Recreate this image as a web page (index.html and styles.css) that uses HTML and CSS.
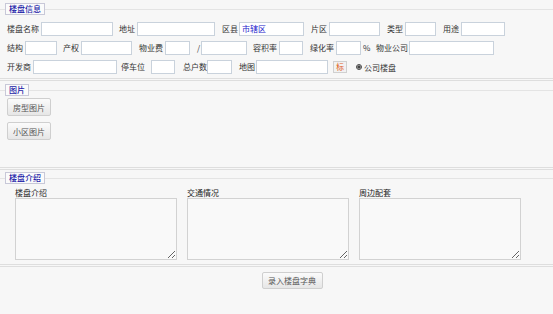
FILE: index.html
```html
<!DOCTYPE html>
<html lang="zh-CN">
<head>
<meta charset="UTF-8">
<title>楼盘字典</title>
<link rel="stylesheet" href="styles.css">
</head>
<body>
<form class="page">
  <fieldset class="box box-info">
    <legend>楼盘信息</legend>
    <div class="row">
      <span class="lb w34">楼盘名称</span><input class="ipt w72" type="text">
      <span class="lb ml6 w18">地址</span><input class="ipt w78" type="text">
      <span class="lb ml7 w17">区县</span><span class="ipt pick w65">市辖区</span>
      <span class="lb ml7 w18">片区</span><input class="ipt w51" type="text">
      <span class="lb ml7 w18">类型</span><input class="ipt w31" type="text">
      <span class="lb ml7 w18">用途</span><input class="ipt w44" type="text">
    </div>
    <div class="row">
      <span class="lb w18">结构</span><input class="ipt w32" type="text">
      <span class="lb ml6 w18">产权</span><input class="ipt w51" type="text">
      <span class="lb ml7 w26">物业费</span><input class="ipt w25" type="text">
      <span class="lb ml7 w4">/</span><input class="ipt w46" type="text">
      <span class="lb ml6 w26">容积率</span><input class="ipt w24" type="text">
      <span class="lb ml7 w26">绿化率</span><input class="ipt w25" type="text">
      <span class="lb ml2 w13">%</span>
      <span class="lb w33">物业公司</span><input class="ipt w85" type="text">
    </div>
    <div class="row">
      <span class="lb w26">开发商</span><input class="ipt w84" type="text">
      <span class="lb ml4 w30">停车位</span><input class="ipt w24" type="text">
      <span class="lb ml8 w24">总户数</span><input class="ipt w25" type="text">
      <span class="lb ml7 w17">地图</span><input class="ipt w72" type="text">
      <span class="mark">标</span>
      <label class="own"><input type="radio" checked>公司楼盘</label>
    </div>
  </fieldset>

  <fieldset class="box box-pic">
    <legend>图片</legend>
    <button type="button" class="btn">房型图片</button>
    <button type="button" class="btn">小区图片</button>
  </fieldset>

  <fieldset class="box box-desc">
    <legend>楼盘介绍</legend>
    <div class="cols">
      <div class="col">
        <div class="cap">楼盘介绍</div>
        <textarea class="txt"></textarea>
      </div>
      <div class="col">
        <div class="cap">交通情况</div>
        <textarea class="txt"></textarea>
      </div>
      <div class="col">
        <div class="cap">周边配套</div>
        <textarea class="txt"></textarea>
      </div>
    </div>
  </fieldset>

  <div class="foot">
    <button type="button" class="btn btn-save">录入楼盘字典</button>
  </div>
</form>
</body>
</html>
```

FILE: styles.css
```css
body {
  margin: 0;
  background-color: #f7f7f7;
  font-family: "Noto Sans CJK SC", "Liberation Sans", sans-serif;
  font-size: 8px;
  color: #333;
}
.page {
  margin: 0;
}
.box {
  margin: 3px 0 0 0;
  padding: 0;
  border: none;
  border-top: 1px solid #e4e4e4;
  border-bottom: 3px double #dedede;
}
.box legend {
  margin-left: 5px;
  padding: 0 3px;
  height: 12px;
  line-height: 10px;
  box-sizing: border-box;
  border: 1px solid #c8c8d8;
  background-color: #fbfbfb;
  color: #1c1ca8;
  font-weight: 500;
}
.box-info {
  padding: 7px 0 4px 7px;
}
.box-info legend {
  margin-left: -2px;
}
.row {
  display: flex;
  align-items: center;
  height: 14px;
  margin-bottom: 5px;
}
.row:last-child {
  margin-bottom: 0;
}
.lb {
  flex: none;
  white-space: nowrap;
  line-height: 14px;
}
.ipt {
  flex: none;
  box-sizing: border-box;
  height: 14px;
  margin: 0;
  padding: 0 2px;
  border: 1px solid #c9d2dc;
  background-color: #fff;
  font: inherit;
}
.pick {
  color: #2222cc;
  line-height: 12px;
}
.mark {
  margin-left: 5px;
  width: 14px;
  height: 12px;
  box-sizing: border-box;
  border: 1px solid #d0d0d0;
  background-color: #f2f2f2;
  color: #e0601c;
  text-align: center;
  line-height: 10px;
}
.own {
  display: flex;
  align-items: center;
  margin-left: 9px;
  white-space: nowrap;
}
.own input {
  width: 6px;
  height: 6px;
  margin: 0 2px 0 0;
  accent-color: #444;
}

.ml2 { margin-left: 2px; }
.ml4 { margin-left: 4px; }
.ml6 { margin-left: 6px; }
.ml7 { margin-left: 7px; }
.ml8 { margin-left: 8px; }
.w4 { width: 4px; }
.w13 { width: 13px; }
.w17 { width: 17px; }
.w18 { width: 18px; }
.w24 { width: 24px; }
.w25 { width: 25px; }
.w26 { width: 26px; }
.w30 { width: 30px; }
.w31 { width: 31px; }
.w32 { width: 32px; }
.w33 { width: 33px; }
.w34 { width: 34px; }
.w44 { width: 44px; }
.w46 { width: 46px; }
.w51 { width: 51px; }
.w65 { width: 65px; }
.w72 { width: 72px; }
.w78 { width: 78px; }
.w84 { width: 84px; }
.w85 { width: 85px; }

.box-pic {
  padding: 2px 0 27px 7px;
}
.box-pic legend {
  margin-left: -2px;
}
.btn {
  display: block;
  height: 18px;
  padding: 0 5px;
  margin: 0 0 6px 0;
  border: 1px solid #cfcfcf;
  border-radius: 2px;
  background: linear-gradient(#fbfbfb, #e6e6e6);
  color: #555;
  font: inherit;
}
.box-pic .btn:last-child {
  margin-bottom: 0;
}

.box-desc {
  margin-top: 2px;
  padding: 4px 0 4px 15px;
}
.box-desc legend {
  margin-left: -10px;
}
.cols {
  display: flex;
  gap: 10px;
}
.cap {
  height: 10px;
  line-height: 10px;
  color: #222;
}
.txt {
  display: block;
  box-sizing: border-box;
  width: 162px;
  height: 62px;
  margin: 0;
  border: 1px solid #d2d2d2;
  background-color: #f9f9f9;
}

.foot {
  display: flex;
  justify-content: center;
  padding-top: 5px;
}
.btn-save {
  width: 61px;
  height: 17px;
  margin: 0 0 0 31px;
  padding: 0;
}
```
